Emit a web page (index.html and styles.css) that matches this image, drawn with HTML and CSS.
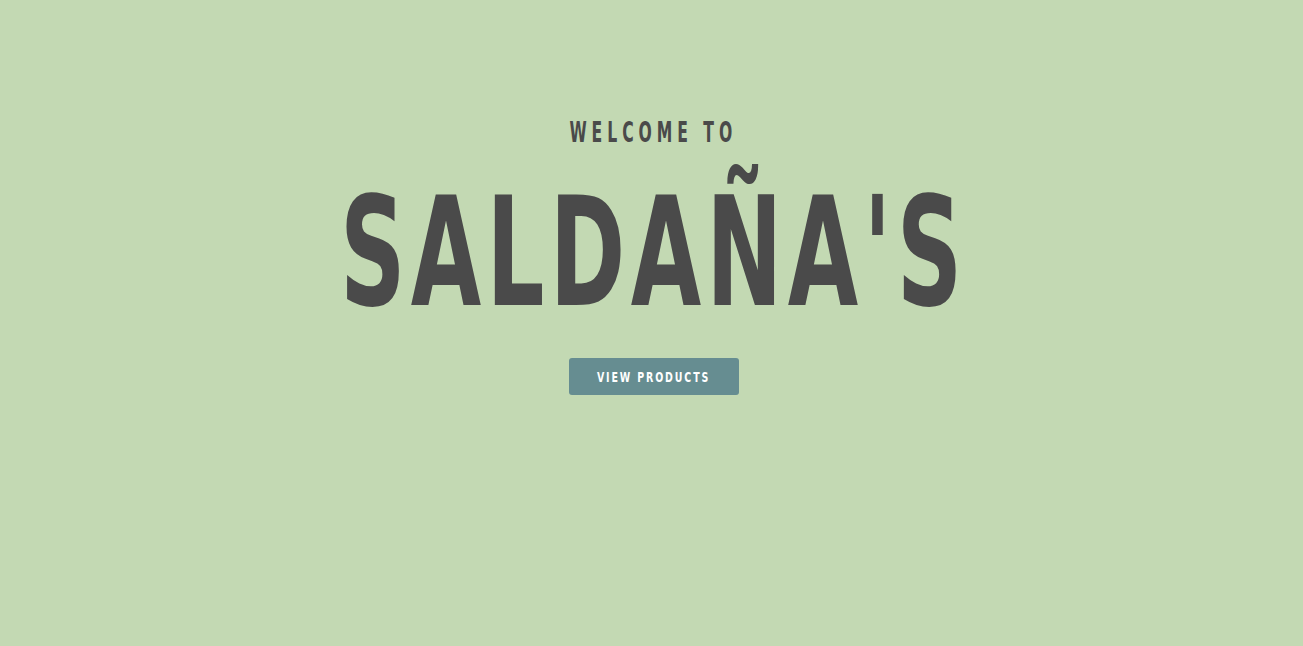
FILE: index.html
```html
<!DOCTYPE html>
<html lang="es">
<head>
<meta charset="utf-8">
<title>Saldaña's</title>
<link rel="stylesheet" href="styles.css">
</head>
<body>
<main class="hero">
  <p class="welcome"><span class="squeeze">WELCOME TO</span></p>
  <h1 class="title"><span class="squeeze squeeze-title">SALDAÑA'S</span></h1>
  <a class="btn" href="#"><span class="squeeze squeeze-btn">VIEW PRODUCTS</span></a>
</main>
</body>
</html>
```
FILE: styles.css
```css
html, body {
  margin: 0;
  padding: 0;
  background: #c3d9b3;
  height: 100%;
}
body {
  font-family: "DejaVu Sans Condensed", "DejaVu Sans", sans-serif;
  font-weight: bold;
  color: #4a4a4a;
}
.hero {
  display: flex;
  flex-direction: column;
  align-items: center;
  padding-top: 113px;
  padding-left: 4px;
}
.squeeze {
  display: inline-block;
  transform: scaleX(0.62);
  transform-origin: center;
  white-space: nowrap;
}
.squeeze-title {
  transform: scaleX(0.665);
}
.squeeze-btn {
  transform: scaleX(0.75);
}
.welcome {
  margin: 0;
  font-size: 28px;
  line-height: 40px;
  letter-spacing: 8px;
}
.title {
  margin: 10px 0 0;
  font-size: 152px;
  line-height: 180px;
  letter-spacing: 8px;
}
.btn {
  margin-top: 15px;
  display: flex;
  align-items: center;
  justify-content: center;
  width: 170px;
  height: 37px;
  background: #668d91;
  border-radius: 3px;
  color: #ffffff;
  text-decoration: none;
  font-size: 14px;
  letter-spacing: 2.5px;
}
```
